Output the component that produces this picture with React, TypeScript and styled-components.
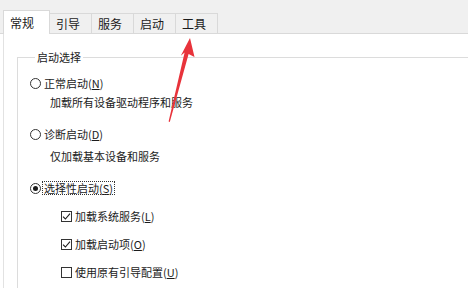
import React from "react";
import styled, { createGlobalStyle } from "styled-components";

const GlobalStyle = createGlobalStyle`
  html, body { margin: 0; padding: 0; background: #ffffff; }
  body {
    font-family: "Microsoft YaHei", "Noto Sans CJK SC", "Noto Sans", sans-serif;
    font-size: 11px;
    color: #1b1b1b;
  }
`;

const Screen = styled.div`
  position: relative;
  width: 468px;
  height: 288px;
  overflow: hidden;
  background: #ffffff;
`;

const TabStrip = styled.div`
  display: flex;
  align-items: flex-end;
  height: 33px;
  padding-left: 3px;
  background: #f0f0f0;
  border-bottom: 1px solid #d9d9d9;
`;

const Tab = styled.div<{ $active?: boolean }>`
  position: relative;
  display: flex;
  align-items: center;
  box-sizing: border-box;
  height: ${(p) => (p.$active ? 24 : 20)}px;
  margin-bottom: ${(p) => (p.$active ? -1 : 0)}px;
  margin-left: ${(p) => (p.$active ? 0 : -1)}px;
  padding: ${(p) => (p.$active ? "0 15px 0 6px" : "0 11px 0 6px")};
  border: 1px solid #d9d9d9;
  border-bottom: none;
  background: ${(p) => (p.$active ? "#ffffff" : "#f0f0f0")};
  z-index: ${(p) => (p.$active ? 1 : 0)};
  font-size: 12px;
  line-height: 14px;
  color: #1b1b1b;
  white-space: nowrap;
`;

const Panel = styled.div`
  margin-left: 3px;
  height: 254px;
  border-left: 1px solid #e2e2e2;
  padding: 16px 0 0 13px;
  background: #ffffff;
`;

const GroupBox = styled.fieldset`
  margin: 0;
  width: 600px;
  padding: 11px 0 40px 12px;
  border: 1px solid #dcdcdc;
  display: flex;
  flex-direction: column;
  align-items: flex-start;
`;

const Legend = styled.legend`
  margin-left: 5px;
  padding: 0 2px;
  font-size: 11px;
  line-height: 14px;
  color: #1b1b1b;
`;

const OptionRow = styled.div<{ $top?: number; $indent?: number }>`
  display: flex;
  align-items: center;
  height: 16px;
  margin-top: ${(p) => p.$top ?? 0}px;
  margin-left: ${(p) => p.$indent ?? 0}px;
  white-space: nowrap;
`;

const RadioMark = styled.span<{ $checked?: boolean }>`
  position: relative;
  box-sizing: border-box;
  width: 11px;
  height: 11px;
  margin-right: 3px;
  border: 1px solid #333333;
  border-radius: 50%;
  background: #ffffff;
  flex: none;
  &::after {
    content: "";
    display: ${(p) => (p.$checked ? "block" : "none")};
    position: absolute;
    left: 2px;
    top: 2px;
    width: 5px;
    height: 5px;
    border-radius: 50%;
    background: #1b1b1b;
  }
`;

const CheckMark = styled.span`
  display: flex;
  align-items: center;
  justify-content: center;
  box-sizing: border-box;
  width: 11px;
  height: 11px;
  margin-right: 3px;
  border: 1px solid #333333;
  background: #ffffff;
  flex: none;
`;

const Label = styled.span<{ $focused?: boolean }>`
  display: inline-block;
  padding: 0 1px;
  line-height: 12px;
  margin-left: -1px;
  outline: ${(p) => (p.$focused ? "1px dotted #333333" : "none")};
  outline-offset: 0;
`;

const Description = styled.div<{ $top: number }>`
  height: 16px;
  line-height: 16px;
  margin-top: ${(p) => p.$top}px;
  margin-left: 20px;
  white-space: nowrap;
`;

const ArrowOverlay = styled.svg`
  position: absolute;
  left: 0;
  top: 0;
  pointer-events: none;
`;

const Check = () => (
  <svg width="9" height="9" viewBox="0 0 9 9">
    <path d="M1 4.6 L3.4 7 L8 1.6" fill="none" stroke="#1b1b1b" strokeWidth="1.1" />
  </svg>
);

const Caption: React.FC<{ text: string; hot: string }> = ({ text, hot }) => (
  <>
    {text}(<u>{hot}</u>)
  </>
);

const tabs = ["常规", "引导", "服务", "启动", "工具"];

export default function App() {
  return (
    <>
      <GlobalStyle />
      <Screen>
        <TabStrip>
          {tabs.map((t, i) => (
            <Tab key={t} $active={i === 0}>
              {t}
            </Tab>
          ))}
        </TabStrip>
        <Panel>
          <GroupBox>
            <Legend>启动选择</Legend>
            <OptionRow>
              <RadioMark />
              <Label>
                <Caption text="正常启动" hot="N" />
              </Label>
            </OptionRow>
            <Description $top={3}>加载所有设备驱动程序和服务</Description>
            <OptionRow $top={16}>
              <RadioMark />
              <Label>
                <Caption text="诊断启动" hot="D" />
              </Label>
            </OptionRow>
            <Description $top={6}>仅加载基本设备和服务</Description>
            <OptionRow $top={16}>
              <RadioMark $checked />
              <Label $focused>
                <Caption text="选择性启动" hot="S" />
              </Label>
            </OptionRow>
            <OptionRow $top={12} $indent={31}>
              <CheckMark>
                <Check />
              </CheckMark>
              <Label>
                <Caption text="加载系统服务" hot="L" />
              </Label>
            </OptionRow>
            <OptionRow $top={12} $indent={31}>
              <CheckMark>
                <Check />
              </CheckMark>
              <Label>
                <Caption text="加载启动项" hot="O" />
              </Label>
            </OptionRow>
            <OptionRow $top={12} $indent={31}>
              <CheckMark />
              <Label>
                <Caption text="使用原有引导配置" hot="U" />
              </Label>
            </OptionRow>
          </GroupBox>
        </Panel>
        <ArrowOverlay width="468" height="288" viewBox="0 0 468 288">
          <polygon
            points="190,38 194.5,57 188.6,54 169.8,122 168.6,121.6 184.6,52.6 180.8,55.8"
            fill="#e8333b"
          />
        </ArrowOverlay>
      </Screen>
    </>
  );
}
